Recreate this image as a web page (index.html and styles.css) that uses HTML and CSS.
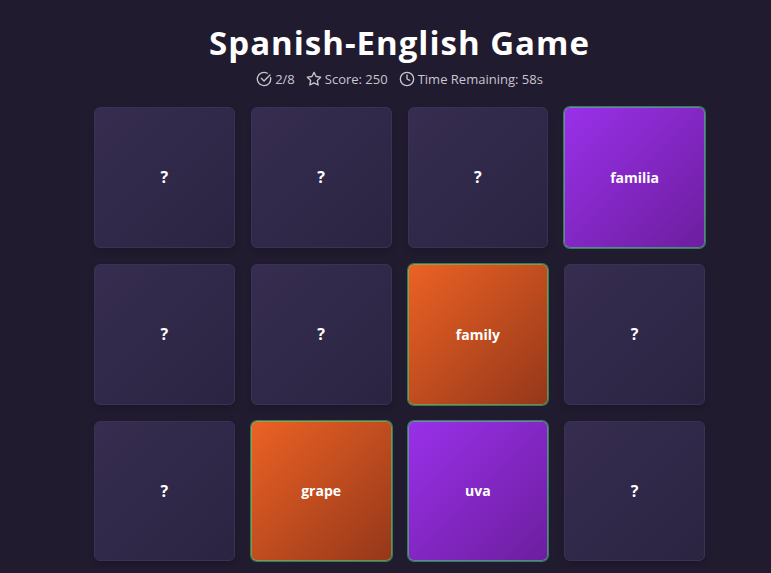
FILE: index.html
```html
<!DOCTYPE html>
<html lang="en">
<head>
	<meta charset="UTF-8">
	<meta name="viewport" content="width=device-width, initial-scale=1">
	<title>Spanish-English Game</title>
	<link rel="stylesheet" href="styles.css">
</head>
<body>
	<main class="game">
		<h1 class="title">Spanish-English Game</h1>
		<!-- game stats -->
		<div class="stats">
			<div class="stat">
				<svg class="icon" viewBox="0 0 24 24" aria-hidden="true"><path d="M21.8 10A10 10 0 1 1 17 3.34"/><path d="M8 11l4 4 9-9"/></svg>
				<span>2/8</span>
			</div>
			<div class="stat">
				<svg class="icon" viewBox="0 0 24 24" aria-hidden="true"><path d="M12 2l3.09 6.26L22 9.27l-5 4.87 1.18 6.88L12 17.77l-6.18 3.25L7 14.14 2 9.27l6.91-1.01z"/></svg>
				<span>Score: 250</span>
			</div>
			<div class="stat">
				<svg class="icon" viewBox="0 0 24 24" aria-hidden="true"><circle cx="12" cy="12" r="10"/><path d="M12 6v6l4 2"/></svg>
				<span>Time Remaining: 58s</span>
			</div>
		</div>
		<!-- cards -->
		<div class="board">
			<button type="button" class="card">?</button>
			<button type="button" class="card">?</button>
			<button type="button" class="card">?</button>
			<button type="button" class="card spanish matched">familia</button>
			<button type="button" class="card">?</button>
			<button type="button" class="card">?</button>
			<button type="button" class="card english matched">family</button>
			<button type="button" class="card">?</button>
			<button type="button" class="card">?</button>
			<button type="button" class="card english matched">grape</button>
			<button type="button" class="card spanish matched">uva</button>
			<button type="button" class="card">?</button>
		</div>
	</main>
</body>
</html>
```

FILE: styles.css
```css
*{box-sizing:border-box;}
body{
	margin: 0;
	background: #211b2f;
	color: #fff;
	font-family: "Segoe UI", "Open Sans", "Noto Sans", sans-serif;
}

.game{
	padding: 23px 66px 8px 94px;
}

.title{
	margin: 0;
	font-size: 33px;
	line-height: 40px;
	font-weight: 700;
	letter-spacing: 1px;
	text-align: center;
	white-space: nowrap;
}

/* stats */
.stats{
	display: flex;
	justify-content: center;
	gap: 11px;
	margin-top: 5px;
	font-size: 13px;
	line-height: 22px;
	color: #c9c6d0;
}
.stat{
	display: flex;
	align-items: center;
	gap: 3px;
	white-space: nowrap;
}
.icon{
	width: 16px;
	height: 16px;
	fill: none;
	stroke: currentColor;
	stroke-width: 2;
	stroke-linecap: round;
	stroke-linejoin: round;
}

/* board */
.board{
	display: grid;
	grid-template-columns: repeat(4, 1fr);
	gap: 16px;
	margin-top: 17px;
}
.card{
	aspect-ratio: 1;
	min-width: 0;
	padding: 0;
	border: 1px solid #3a3058;
	border-radius: 6px;
	background: linear-gradient(135deg, #362d50, #2b2441) border-box;
	box-shadow: 0 4px 6px rgba(0,0,0,.15);
	color: #fff;
	font-family: inherit;
	font-size: 16px;
	font-weight: 700;
	cursor: pointer;
}
.card.spanish{
	background-image: linear-gradient(135deg, #9a30ea, #6c1e9e);
}
.card.english{
	background-image: linear-gradient(135deg, #ec6224, #94371a);
}
.card.matched{
	border-color: rgba(74,222,128,.5);
	box-shadow: 0 0 0 1px rgba(74,222,128,.5);
	font-size: 14px;
}
```
